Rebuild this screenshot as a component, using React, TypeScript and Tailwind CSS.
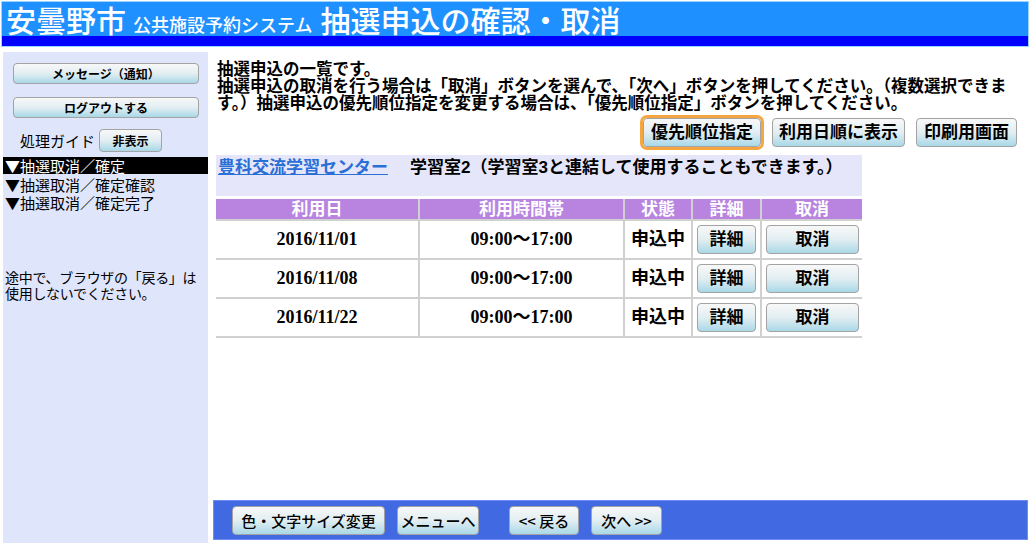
import type { ReactNode } from 'react';

const btnBase =
  'rounded-[4px] border border-[#a3a3a3] bg-linear-to-b from-[#f8f8f8] via-[#e2eef2] to-[#a9d8e7] text-black leading-none whitespace-nowrap';

function Btn({ children, className }: { children: ReactNode; className: string }) {
  return <button className={`${btnBase} ${className}`}>{children}</button>;
}

const rows = [
  { date: '2016/11/01', time: '09:00～17:00' },
  { date: '2016/11/08', time: '09:00～17:00' },
  { date: '2016/11/22', time: '09:00～17:00' },
];

function Sidebar() {
  return (
    <aside className="ml-[3px] flex w-[205px] flex-col bg-[#dfe5fb] pt-[11px] font-['Noto_Sans_CJK_JP',sans-serif]">
      <div className="flex flex-col gap-[13px] px-[10px]">
        <Btn className="block h-[21px] w-[186px] text-[12px] font-bold">メッセージ（通知）</Btn>
        <Btn className="block h-[21px] w-[186px] text-[12px] font-bold">ログアウトする</Btn>
      </div>
      <div className="mt-[11px] flex items-center pl-[17px]">
        <span className="text-[15px] leading-[17px]">処理ガイド</span>
        <Btn className="ml-[4px] block h-[23px] w-[63px] text-[12px] font-bold">非表示</Btn>
      </div>
      <ul className="mt-[5px] text-[15px]">
        <li className="h-[17px] bg-black pl-[2px] leading-[17px] text-white">▼抽選取消／確定</li>
        <li className="mt-[1px] h-[18px] pl-[2px] leading-[19px]">▼抽選取消／確定確認</li>
        <li className="h-[18px] pl-[2px] leading-[19px]">▼抽選取消／確定完了</li>
      </ul>
      <p className="mt-[58px] pl-[2px] text-[14px] leading-[16px] tracking-[-0.3px]">
        途中で、ブラウザの「戻る」は
        <br />
        使用しないでください。
      </p>
    </aside>
  );
}

function ReservationTable() {
  const cell = 'border-2 border-[#d0d0d0]';
  return (
    <table className="mt-[3px] w-[646px] border-collapse text-center">
      <thead>
        <tr className="h-[21px] bg-[#b884e0] text-[17px] font-bold leading-none text-white">
          <th className={`${cell} w-[203px] border-t-0 border-l-0`}>利用日</th>
          <th className={`${cell} w-[205px] border-t-0`}>利用時間帯</th>
          <th className={`${cell} w-[68px] border-t-0`}>状態</th>
          <th className={`${cell} w-[69px] border-t-0`}>詳細</th>
          <th className={`${cell} border-t-0 border-r-0`}>取消</th>
        </tr>
      </thead>
      <tbody>
        {rows.map((r, i) => (
          <tr key={i} className="h-[39px]">
            <td className={`${cell} border-l-0 font-['Liberation_Serif','Noto_Sans_CJK_JP',serif] text-[18px] font-bold`}>
              {r.date}
            </td>
            <td className={`${cell} font-['Liberation_Serif','Noto_Sans_CJK_JP',serif] text-[18px] font-bold`}>
              {r.time}
            </td>
            <td className={`${cell} text-[18px] font-bold`}>申込中</td>
            <td className={`${cell} px-[4px]`}>
              <Btn className="h-[29px] w-full text-[17px] font-bold">詳細</Btn>
            </td>
            <td className={`${cell} border-r-0 pl-[4px] pr-[3px]`}>
              <Btn className="h-[29px] w-full text-[17px] font-bold">取消</Btn>
            </td>
          </tr>
        ))}
      </tbody>
    </table>
  );
}

export default function App() {
  return (
    <div className="flex h-[543px] w-[1030px] flex-col overflow-hidden bg-white font-['Liberation_Sans','Noto_Sans_CJK_JP',sans-serif] text-black">
      {/* Header */}
      <header className="mx-[1px] mt-[1px] border border-[#9fd3ff]">
        <div className="flex h-[34px] items-baseline bg-[#1e90ff] pl-[4px] font-['Noto_Sans_CJK_JP',sans-serif] font-medium text-white">
          <span className="text-[30px] leading-[34px]">安曇野市</span>
          <span className="ml-[7px] text-[18px]">公共施設予約システム</span>
          <span className="ml-[8px] text-[30px] leading-[34px]">抽選申込の確認・取消</span>
        </div>
        <div className="h-[10px] bg-[#0000ff]" />
      </header>

      <div className="mt-[5px] flex flex-1">
        <Sidebar />

        <main className="ml-[5px] mr-[2px] flex flex-1 flex-col pt-[9px]">
          <div className="pl-[4px] text-[16.5px] font-bold leading-[17px] whitespace-nowrap">
            <div>抽選申込の一覧です。</div>
            <div>抽選申込の取消を行う場合は「取消」ボタンを選んで、「次へ」ボタンを押してください。（複数選択できま</div>
            <div>す。）抽選申込の優先順位指定を変更する場合は、「優先順位指定」ボタンを押してください。</div>
          </div>

          <div className="mt-[6px] flex justify-end gap-[11px] pr-[11px]">
            <Btn className="h-[29px] px-[7px] text-[17px] font-bold ring-[3px] ring-[#f5a640]">優先順位指定</Btn>
            <Btn className="h-[29px] px-[6px] text-[17px] font-bold">利用日順に表示</Btn>
            <Btn className="h-[29px] px-[7px] text-[17px] font-bold">印刷用画面</Btn>
          </div>

          <div className="ml-[3px]">
            <div className="mt-[8px] flex h-[41px] w-[646px] items-start bg-[#e6e6fa] pl-[2px] pt-[3px] text-[17px] font-bold leading-[20px]">
              <a href="#" className="text-[#2a6fd6] underline">豊科交流学習センター</a>
              <span className="ml-[22px]">学習室2（学習室3と連結して使用することもできます。）</span>
            </div>
            <ReservationTable />
          </div>

          {/* Footer bar */}
          <div className="mb-[3px] mt-auto flex h-[40px] items-center border border-[#6d8ef0] bg-[#4169e1] pl-[18px] font-['Noto_Sans_CJK_JP',sans-serif] font-medium">
            <Btn className="h-[29px] w-[153px] text-[15px]">色・文字サイズ変更</Btn>
            <Btn className="ml-[12px] h-[29px] w-[82px] text-[15px]">メニューへ</Btn>
            <Btn className="ml-[30px] h-[29px] w-[70px] text-[15px]">&lt;&lt; 戻る</Btn>
            <Btn className="ml-[12px] h-[29px] w-[71px] text-[15px]">次へ &gt;&gt;</Btn>
          </div>
        </main>
      </div>
    </div>
  );
}
